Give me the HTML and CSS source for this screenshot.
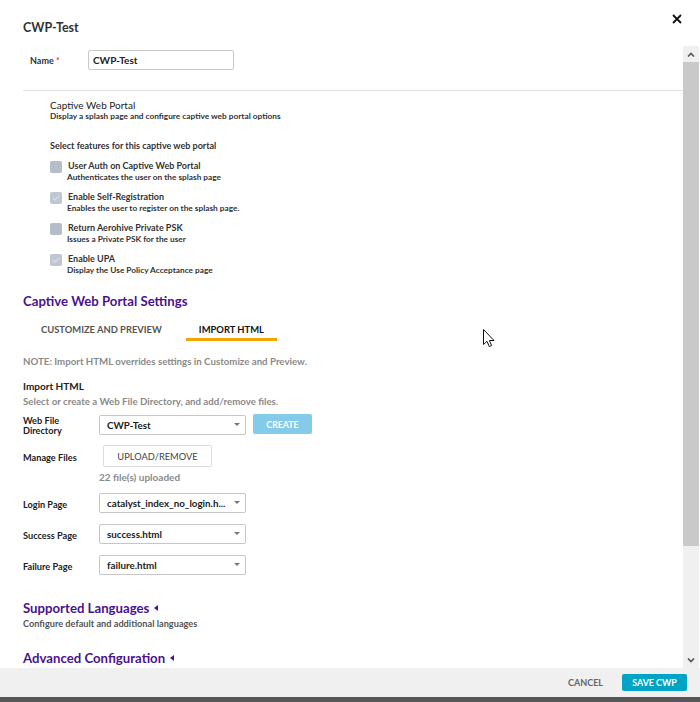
FILE: index.html
```html
<!doctype html>
<html>
<head>
<meta charset="utf-8">
<title>CWP-Test</title>
<link rel="stylesheet" href="styles.css">
</head>
<body>
<div class="modal">
  <div class="modal-head">
    <h1>CWP-Test</h1>
    <svg class="close" width="10" height="10" viewBox="0 0 10 10"><path d="M1 1L9 9M9 1L1 9" stroke="#111" stroke-width="1.8"/></svg>
  </div>

  <div class="modal-body">
    <div class="content">
      <div class="name-row">
        <label class="name-label">Name <span class="req">*</span></label>
        <div class="name-input">CWP-Test</div>
      </div>
      <div class="divider"></div>

      <div class="cwp">
        <h3>Captive Web Portal</h3>
        <p class="sub">Display a splash page and configure captive web portal options</p>
        <h4>Select features for this captive web portal</h4>
        <ul class="features">
          <li>
            <span class="check"></span>
            <div><div class="f-title">User Auth on Captive Web Portal</div><div class="sub">Authenticates the user on the splash page</div></div>
          </li>
          <li>
            <span class="check on"><svg width="8" height="6" viewBox="0 0 8 6"><path d="M1 3L3 5L7 1" stroke="#d6dbe2" stroke-width="1.4" fill="none"/></svg></span>
            <div><div class="f-title">Enable Self-Registration</div><div class="sub">Enables the user to register on the splash page.</div></div>
          </li>
          <li>
            <span class="check"></span>
            <div><div class="f-title">Return Aerohive Private PSK</div><div class="sub">Issues a Private PSK for the user</div></div>
          </li>
          <li>
            <span class="check on"><svg width="8" height="6" viewBox="0 0 8 6"><path d="M1 3L3 5L7 1" stroke="#d6dbe2" stroke-width="1.4" fill="none"/></svg></span>
            <div><div class="f-title">Enable UPA</div><div class="sub">Display the Use Policy Acceptance page</div></div>
          </li>
        </ul>
      </div>

      <h2 class="purple settings">Captive Web Portal Settings</h2>
      <div class="tabs">
        <div class="tab">CUSTOMIZE AND PREVIEW</div>
        <div class="tab active">IMPORT HTML</div>
      </div>
      <p class="note">NOTE: Import HTML overrides settings in Customize and Preview.</p>

      <h3 class="import-title">Import HTML</h3>
      <p class="note import-sub">Select or create a Web File Directory, and add/remove files.</p>

      <div class="form-row dir-row">
        <label class="f-label">Web File<br>Directory</label>
        <div class="select">CWP-Test<span class="caret"></span></div>
        <button class="btn-create">CREATE</button>
      </div>
      <div class="form-row files-row">
        <label class="f-label">Manage Files</label>
        <button class="btn-upload">UPLOAD/REMOVE</button>
      </div>
      <div class="uploaded">22 file(s) uploaded</div>
      <div class="form-row page-row first">
        <label class="f-label">Login Page</label>
        <div class="select">catalyst_index_no_login.h...<span class="caret"></span></div>
      </div>
      <div class="form-row page-row">
        <label class="f-label">Success Page</label>
        <div class="select">success.html<span class="caret"></span></div>
      </div>
      <div class="form-row page-row">
        <label class="f-label">Failure Page</label>
        <div class="select">failure.html<span class="caret"></span></div>
      </div>

      <h2 class="purple langs">Supported Languages <span class="tri"></span></h2>
      <p class="sub langs-sub">Configure default and additional languages</p>
      <h2 class="purple adv">Advanced Configuration <span class="tri"></span></h2>
    </div>

    <div class="scrollbar">
      <div class="sb-btn"><svg width="8" height="5" viewBox="0 0 8 5"><path d="M1 4.5L4 1.5L7 4.5" stroke="#555" stroke-width="1.6" fill="none"/></svg></div>
      <div class="sb-thumb"></div>
      <div class="sb-track"></div>
      <div class="sb-btn"><svg width="8" height="5" viewBox="0 0 8 5"><path d="M1 0.5L4 3.5L7 0.5" stroke="#555" stroke-width="1.6" fill="none"/></svg></div>
    </div>
  </div>

  <div class="modal-foot">
    <button class="btn-cancel">CANCEL</button>
    <button class="btn-save">SAVE CWP</button>
  </div>
  <div class="bottom-bar"></div>
</div>

<svg class="cursor" width="13" height="20" viewBox="0 0 13 20"><path d="M0.5 0.5L0.5 15.5L4 12.3L6.3 17.6L8.6 16.6L6.4 11.5L11 11.5Z" fill="#fff" stroke="#111" stroke-width="1"/></svg>
</body>
</html>
```

FILE: styles.css
```css
* {
  margin: 0;
  padding: 0;
  box-sizing: border-box;
}

body {
  font-family: Lato, "Open Sans", sans-serif;
  color: #333;
  background: #fff;
  width: 700px;
  height: 702px;
  overflow: hidden;
}

button {
  font-family: inherit;
  cursor: pointer;
}

ul {
  list-style: none;
}

.modal {
  display: flex;
  flex-direction: column;
  height: 702px;
}

.modal-head {
  height: 46px;
  display: flex;
  justify-content: space-between;
  align-items: flex-start;
  padding: 0 18px 0 23px;
}

.modal-head h1 {
  font-size: 12.5px;
  font-weight: 700;
  line-height: 16px;
  margin-top: 20px;
  color: #333;
}

.close {
  margin-top: 14px;
}

.modal-body {
  display: flex;
  height: 622px;
}

.content {
  flex: 1;
  padding-left: 23px;
  overflow: hidden;
}

.name-row {
  display: flex;
  align-items: center;
  margin-top: 4px;
  height: 20px;
}

.name-label {
  font-size: 9px;
  font-weight: 700;
  width: 65px;
  padding-left: 7px;
}

.req {
  color: #e0453a;
}

.name-input {
  width: 146px;
  height: 20px;
  border: 1px solid #c8c8c8;
  border-radius: 2px;
  font-size: 10px;
  font-weight: 700;
  line-height: 18px;
  padding-left: 4px;
  color: #222;
}

.divider {
  height: 1px;
  background: #e2e2e2;
  margin-top: 20px;
}

.cwp {
  padding-left: 27px;
}

.cwp h3 {
  font-size: 10px;
  font-weight: 400;
  line-height: 12px;
  margin-top: 8px;
  color: #222;
}

.sub {
  font-size: 8.3px;
  font-weight: 700;
  line-height: 10px;
  color: #333;
}

.cwp h4 {
  font-size: 9px;
  font-weight: 700;
  line-height: 12px;
  margin-top: 19px;
  color: #333;
}

.features {
  margin-top: 8px;
}

.features li {
  display: flex;
  height: 22px;
  margin-bottom: 9px;
}

.features li:last-child {
  margin-bottom: 0;
}

.check {
  width: 12px;
  height: 12px;
  margin-top: 1px;
  margin-right: 5px;
  border-radius: 2px;
  background: #b4bdc9;
  display: flex;
  align-items: center;
  justify-content: center;
  flex-shrink: 0;
}

.check.on {
  background: #bfc7d2;
}

.f-title {
  font-size: 9px;
  font-weight: 700;
  line-height: 12px;
  color: #333;
  padding-left: 1px;
}

.purple {
  color: #4b128f;
  font-size: 13.2px;
  font-weight: 700;
  line-height: 16px;
}

.settings {
  margin-top: 18px;
}

.tabs {
  display: flex;
  gap: 11px;
  padding-left: 5px;
  margin-top: 15px;
}

.tab {
  font-size: 9.4px;
  font-weight: 700;
  line-height: 12px;
  color: #555;
  padding: 0 13px 2px;
  border-bottom: 3px solid transparent;
}

.tab.active {
  color: #111;
  border-bottom-color: #f5a300;
}

.note {
  font-size: 9.7px;
  font-weight: 700;
  line-height: 12px;
  color: #8a8a8a;
  margin-top: 14px;
}

.import-title {
  font-size: 10px;
  font-weight: 700;
  line-height: 12px;
  margin-top: 13px;
  color: #222;
}

.import-sub {
  margin-top: 3px;
}

.form-row {
  display: flex;
  align-items: center;
}

.f-label {
  width: 76px;
  font-size: 9.2px;
  font-weight: 700;
  line-height: 10px;
  padding-top: 3px;
  color: #222;
}

.dir-row {
  margin-top: 8px;
  align-items: flex-start;
}

.dir-row .f-label {
  height: 20px;
  padding-top: 1px;
}

.select {
  position: relative;
  width: 147px;
  height: 20px;
  border: 1px solid #c6c6c6;
  border-radius: 2px;
  font-size: 9.8px;
  font-weight: 700;
  line-height: 18px;
  padding-left: 7px;
  color: #222;
}

.caret {
  position: absolute;
  right: 5px;
  top: 7px;
  border-left: 3.5px solid transparent;
  border-right: 3.5px solid transparent;
  border-top: 3.5px solid #777;
}

.btn-create {
  margin-left: 7px;
  margin-top: -1px;
  width: 59px;
  height: 20px;
  border: none;
  border-radius: 2px;
  background: #83cbe9;
  color: #fff;
  font-size: 8.8px;
  font-weight: 700;
}

.files-row {
  margin-top: 10px;
}

.btn-upload {
  margin-left: 4px;
  width: 109px;
  height: 22px;
  border: 1px solid #dcdcdc;
  border-radius: 2px;
  background: #fff;
  color: #444;
  font-size: 9.3px;
  font-weight: 400;
}

.uploaded {
  margin-top: 4px;
  padding-left: 76px;
  font-size: 10px;
  font-weight: 700;
  line-height: 12px;
  color: #8a8a8a;
}

.page-row {
  margin-top: 11px;
}

.page-row.first {
  margin-top: 10px;
}

.langs {
  margin-top: 25px;
  display: flex;
  align-items: center;
}

.tri {
  display: inline-block;
  margin-left: 5px;
  border-top: 3.5px solid transparent;
  border-bottom: 3.5px solid transparent;
  border-right: 4px solid #4b128f;
}

.langs-sub {
  margin-top: 3px;
  font-size: 9.2px;
  color: #555;
}

.adv {
  margin-top: 21px;
  display: flex;
  align-items: center;
}

.scrollbar {
  width: 16px;
  margin-right: 1px;
  display: flex;
  flex-direction: column;
  background: #f0f0f0;
}

.sb-btn {
  height: 16px;
  display: flex;
  align-items: center;
  justify-content: center;
}

.sb-thumb {
  height: 484px;
  background: #c9c9c9;
}

.sb-track {
  flex: 1;
}

.modal-foot {
  height: 29px;
  background: #f0f0f0;
  display: flex;
  justify-content: flex-end;
  align-items: center;
  padding-right: 13px;
}

.btn-cancel {
  border: none;
  background: none;
  color: #666;
  font-size: 9px;
  font-weight: 700;
  margin-right: 19px;
}

.btn-save {
  width: 65px;
  height: 17px;
  border: none;
  border-radius: 2px;
  background: #00a5c5;
  color: #fff;
  font-size: 8.9px;
  font-weight: 700;
}

.bottom-bar {
  height: 5px;
  background: #575757;
}

.cursor {
  position: absolute;
  left: 483px;
  top: 329px;
}
```
